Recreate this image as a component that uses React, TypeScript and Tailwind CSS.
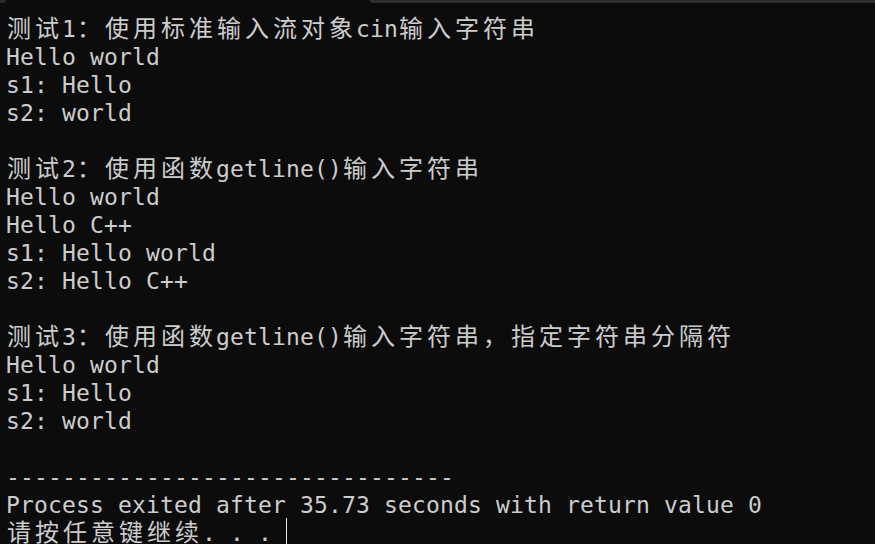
import React from "react";

const LINES: string[] = [
  "测试1：使用标准输入流对象cin输入字符串",
  "Hello world",
  "s1: Hello",
  "s2: world",
  "",
  "测试2：使用函数getline()输入字符串",
  "Hello world",
  "Hello C++",
  "s1: Hello world",
  "s2: Hello C++",
  "",
  "测试3：使用函数getline()输入字符串，指定字符串分隔符",
  "Hello world",
  "s1: Hello",
  "s2: world",
  "",
  "--------------------------------",
  "Process exited after 35.73 seconds with return value 0",
  "请按任意键继续. . . ",
];

const isWide = (c: string) => c.charCodeAt(0) > 0x2e80;

function Line({ text, cursor }: { text: string; cursor?: boolean }) {
  return (
    <div className="h-[28px] flex items-start whitespace-pre">
      {Array.from(text).map((c, i) =>
        isWide(c) ? (
          <span
            key={i}
            className="inline-block w-[28px] h-[28px] mt-[-2.5px] leading-[28px] text-[24px] pl-[1px]"
            style={{ fontFamily: '"Noto Sans CJK SC", "Noto Sans", sans-serif' }}
          >
            {c}
          </span>
        ) : (
          <span
            key={i}
            className="inline-block w-[14px] h-[28px] leading-[28px] text-[23px] text-center"
            style={{ fontFamily: '"DejaVu Sans Mono", "Liberation Mono", monospace' }}
          >
            {c}
          </span>
        )
      )}
      {cursor && <span className="inline-block w-[1px] h-[26px] mt-[-1px] bg-[#e8e8e8]" />}
    </div>
  );
}

export default function App() {
  return (
    <div className="relative w-[875px] h-[544px] overflow-hidden bg-[#0c0c0c] text-[#cccccc]">
      <div className="absolute left-[370px] right-0 top-0 h-[3px] rounded-bl-[3px] bg-[#2e2e2e]" />
      <div className="absolute left-0 top-0 w-[6px] h-[3px] rounded-br-[3px] bg-[#2a2a2a]" />
      <div className="pt-[15px] pl-[6px] flex flex-col">
        {LINES.map((l, i) => (
          <Line key={i} text={l} cursor={i === LINES.length - 1} />
        ))}
      </div>
    </div>
  );
}
